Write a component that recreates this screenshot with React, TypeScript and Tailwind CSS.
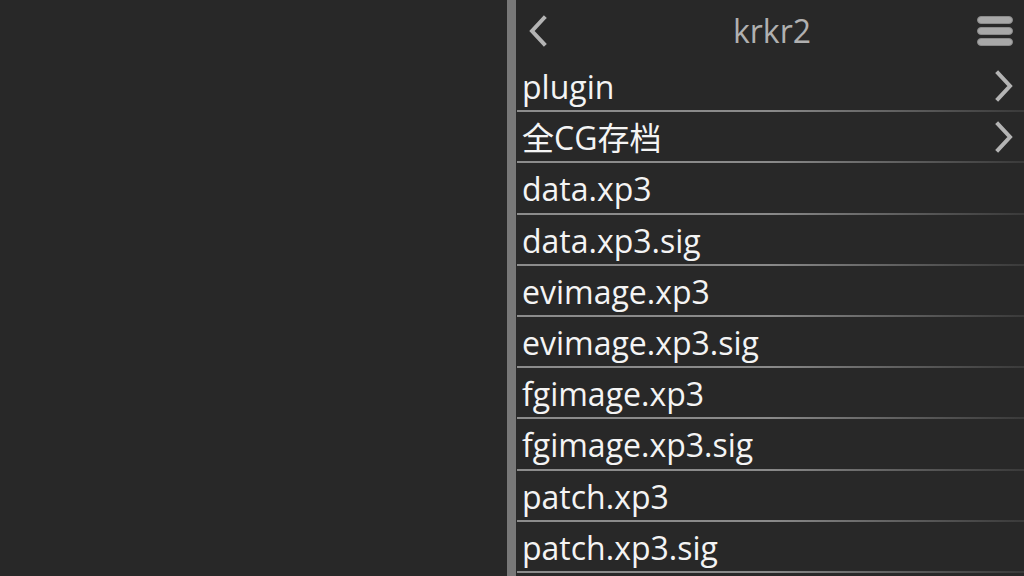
import React from "react";

const files = [
  { name: "plugin", dir: true },
  { name: "全CG存档", dir: true },
  { name: "data.xp3" },
  { name: "data.xp3.sig" },
  { name: "evimage.xp3" },
  { name: "evimage.xp3.sig" },
  { name: "fgimage.xp3" },
  { name: "fgimage.xp3.sig" },
  { name: "patch.xp3" },
  { name: "patch.xp3.sig" },
];

function Chevron({ dir }: { dir: "left" | "right" }) {
  return (
    <svg width="22" height="32" viewBox="0 0 22 32" fill="none">
      <path
        d={dir === "left" ? "M17 3 L5 16 L17 29" : "M5 3 L17 16 L5 29"}
        stroke="#b4b4b4"
        strokeWidth="4"
        strokeLinecap="square"
        strokeLinejoin="miter"
      />
    </svg>
  );
}

function MenuIcon() {
  return (
    <div className="flex w-[36px] flex-col gap-[3px]">
      <div className="h-[8px] rounded-full border border-[#8a8a8a] bg-[#a8a8a8]" />
      <div className="h-[8px] rounded-full border border-[#8a8a8a] bg-[#a8a8a8]" />
      <div className="h-[8px] rounded-full border border-[#8a8a8a] bg-[#a8a8a8]" />
    </div>
  );
}

export default function App() {
  return (
    <div
      className="flex h-[576px] w-[1024px] overflow-hidden bg-[#282828]"
      style={{ fontFamily: '"Open Sans", "Noto Sans CJK SC", sans-serif' }}
    >
      <div className="w-[507px]" />
      <div className="w-[9px] bg-[#787878]" />
      <div className="flex flex-1 flex-col">
        {/* header */}
        <div className="relative flex h-[61px] items-center justify-between pl-[11px] pr-[11px]">
          <Chevron dir="left" />
          <span className="absolute left-0 right-0 pl-[4px] text-center text-[32px] leading-none text-[#b0b0b0]">
            krkr2
          </span>
          <MenuIcon />
        </div>
        {/* list */}
        {files.map((f) => (
          <div key={f.name} className="flex h-[51.2px] shrink-0 flex-col pl-[1px]">
            <div className="flex flex-1 items-center justify-between pl-[5px] pr-[9px]">
              <span className="pt-[3px] text-[32px] leading-none text-[#f4f4f4]">{f.name}</span>
              {f.dir && <Chevron dir="right" />}
            </div>
            <div className="h-[2px] bg-gradient-to-r from-[#8c8c8c] via-[#8a8a8a] to-[#3a3a3a]" />
          </div>
        ))}
      </div>
    </div>
  );
}
